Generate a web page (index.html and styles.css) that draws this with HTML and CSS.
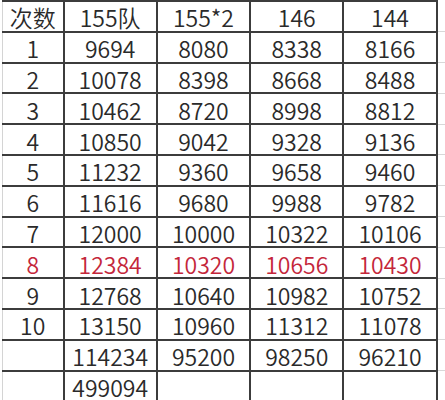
FILE: index.html
```html
<!DOCTYPE html>
<html>
<head>
<meta charset="utf-8">
<link rel="stylesheet" href="styles.css">
</head>
<body>
<div class="sheet">
<table class="grid">
<colgroup>
<col class="c-n"><col class="c-v"><col class="c-v"><col class="c-v"><col class="c-v"><col class="c-x">
</colgroup>
<tbody>
<tr><td class="lead">次数</td><td>155队</td><td>155*2</td><td>146</td><td>144</td><td class="x"></td></tr>
<tr><td class="lead">1</td><td>9694</td><td>8080</td><td>8338</td><td>8166</td><td class="x"></td></tr>
<tr><td class="lead">2</td><td>10078</td><td>8398</td><td>8668</td><td>8488</td><td class="x"></td></tr>
<tr><td class="lead">3</td><td>10462</td><td>8720</td><td>8998</td><td>8812</td><td class="x"></td></tr>
<tr><td class="lead">4</td><td>10850</td><td>9042</td><td>9328</td><td>9136</td><td class="x"></td></tr>
<tr><td class="lead">5</td><td>11232</td><td>9360</td><td>9658</td><td>9460</td><td class="x"></td></tr>
<tr><td class="lead">6</td><td>11616</td><td>9680</td><td>9988</td><td>9782</td><td class="x"></td></tr>
<tr><td class="lead">7</td><td>12000</td><td>10000</td><td>10322</td><td>10106</td><td class="x"></td></tr>
<tr class="hl"><td class="lead">8</td><td>12384</td><td>10320</td><td>10656</td><td>10430</td><td class="x"></td></tr>
<tr><td class="lead">9</td><td>12768</td><td>10640</td><td>10982</td><td>10752</td><td class="x"></td></tr>
<tr><td class="lead">10</td><td>13150</td><td>10960</td><td>11312</td><td>11078</td><td class="x"></td></tr>
<tr><td class="lead"></td><td>114234</td><td>95200</td><td>98250</td><td>96210</td><td class="x"></td></tr>
<tr><td class="lead"></td><td>499094</td><td></td><td></td><td></td><td class="x"></td></tr>
</tbody>
</table>
</div>
</body>
</html>
```
FILE: styles.css
```css
html, body {
  margin: 0;
  padding: 0;
  background: #ffffff;
}
.sheet {
  width: 445px;
  height: 400px;
  overflow: hidden;
  padding: 0 0 0 2px;
  box-sizing: border-box;
}
.grid {
  border-collapse: collapse;
  table-layout: fixed;
  width: 460px;
  font-family: "Noto Sans CJK SC", "Noto Sans", sans-serif;
  font-weight: 350;
  font-size: 23px;
  color: #2a2a2a;
}
.c-n { width: 61px; }
.c-v { width: 93.3px; }
.c-x { width: 26px; }
.grid tr { height: 30.8px; }
.grid td {
  border: 2px solid #3c3c3c;
  padding: 2px 0 0 0;
  text-align: center;
  vertical-align: middle;
  line-height: 24px;
  white-space: nowrap;
}
.grid td.lead {
  border-left: 1px solid #d4d4d4;
}
.grid td.x {
  border-top: 1px solid #d8d8d8;
  border-bottom: 1px solid #d8d8d8;
  border-right: 1px solid #d8d8d8;
}
.grid tr:first-child td.x { border-top: none; }
.grid tr.hl td { color: #c4263a; }
```
